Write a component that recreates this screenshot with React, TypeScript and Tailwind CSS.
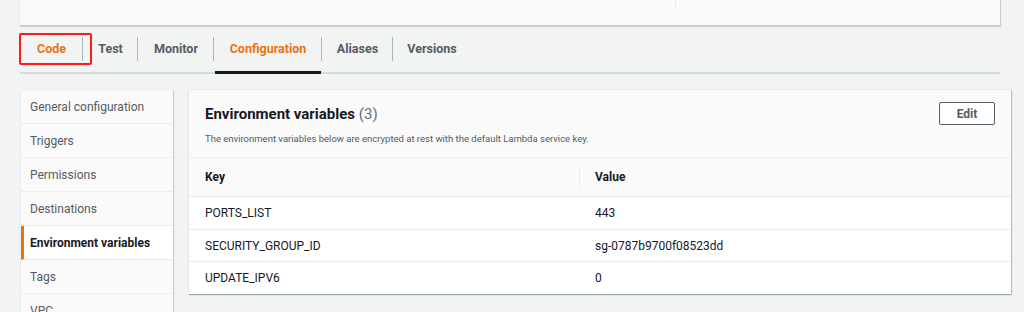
import React from 'react';

const tabs = [
  { label: 'Code', width: 'w-[63px]', active: false, orange: true },
  { label: 'Test', width: 'w-[55px]', active: false, orange: false },
  { label: 'Monitor', width: 'w-[76px]', active: false, orange: false },
  { label: 'Configuration', width: 'w-[108px]', active: true, orange: true },
  { label: 'Aliases', width: 'w-[71px]', active: false, orange: false },
  { label: 'Versions', width: 'w-[78px]', active: false, orange: false },
];

const sideItems = [
  'General configuration',
  'Triggers',
  'Permissions',
  'Destinations',
  'Environment variables',
  'Tags',
  'VPC',
];

const envVars = [
  { key: 'PORTS_LIST', value: '443', h: 'h-[33px]' },
  { key: 'SECURITY_GROUP_ID', value: 'sg-0787b9700f08523dd', h: 'h-[32px]' },
  { key: 'UPDATE_IPV6', value: '0', h: 'h-[32px]' },
];

const App: React.FC = () => {
  return (
    <div className="relative h-[312px] w-[1024px] overflow-hidden bg-[#f2f3f3] font-['Roboto',sans-serif] text-[#16191f]">
      {/* Top card (cut off) */}
      <div className="ml-[20px] flex h-[26px] w-[981px] border-r border-b border-[#c6cccc] bg-[#fafafa] shadow-[0_1px_1px_rgba(0,28,36,0.15)]">
        <div className="h-[8px] w-[656px] border-r border-[#eaeded]" />
      </div>

      {/* Tabs */}
      <div className="relative mt-[8px] ml-[20px] flex h-[40px] w-[980px] border-b-2 border-[#d5dbdb]">
        {tabs.map((t, i) => (
          <div key={t.label} className={`relative flex ${t.width} items-start pt-[7px]`}>
            <span
              className={`w-full text-center text-[12.5px] leading-[16px] font-bold ${t.orange ? 'text-[#ec7211]' : 'text-[#545b64]'}`}
            >
              {t.label}
            </span>
            {i < tabs.length - 1 && <div className="absolute top-[3px] right-0 h-[24px] w-px bg-[#aab7b8]" />}
            {t.active && <div className="absolute right-px bottom-[-2px] left-px h-[3px] bg-[#16191f]" />}
          </div>
        ))}
        {/* red annotation box */}
        <div className="absolute top-[-1px] left-[-1px] h-[32px] w-[73px] rounded-[2px] border-2 border-[#ff1a1a]" />
      </div>

      {/* Content */}
      <div className="mt-[16px] ml-[21px] flex items-start gap-[16px]">
        {/* Sidebar */}
        <div className="w-[152px] bg-[#fafafa] shadow-[0_1px_1px_rgba(0,28,36,0.2),1px_0_1px_rgba(0,28,36,0.15)]">
          {sideItems.map((item) => {
            const active = item === 'Environment variables';
            return (
              <div
                key={item}
                className={`flex h-[34px] items-center border-b border-[#eaeded] text-[12px] ${
                  active ? 'border-l-[3px] border-l-[#ec7211] bg-white pl-[6px] font-bold text-[#16191f]' : 'pl-[9px] text-[#545b64]'
                }`}
              >
                {item}
              </div>
            );
          })}
        </div>

        {/* Main card */}
        <div className="w-[822px] bg-white shadow-[0_1px_1px_rgba(0,28,36,0.35),1px_0_1px_rgba(0,28,36,0.2)]">
          <div className="flex h-[68px] justify-between border-b border-[#eaeded] bg-[#fafafa] pr-[16px] pl-[16px]">
            <div className="pt-[15px]">
              <h2 className="text-[15px] leading-[18px] font-bold">
                Environment variables <span className="font-normal text-[#687078]">(3)</span>
              </h2>
              <p className="mt-[9px] text-[9.5px] text-[#545b64]">
                The environment variables below are encrypted at rest with the default Lambda service key.
              </p>
            </div>
            <div className="pt-[12px]">
              <button className="flex h-[23px] w-[56px] items-center justify-center rounded-[2px] border border-[#545b64] bg-white text-[12px] font-bold text-[#545b64]">
                Edit
              </button>
            </div>
          </div>

          <div className="flex h-[39px] items-center border-b border-[#eaeded] bg-[#fafafa] text-[12px] font-bold">
            <div className="relative flex h-full w-[391px] items-center pl-[16px]">
              Key
              <div className="absolute top-[10px] right-0 h-[19px] w-px bg-[#eaeded]" />
            </div>
            <div className="pl-[15px]">Value</div>
          </div>

          {envVars.map((v, i) => (
            <div
              key={v.key}
              className={`flex ${v.h} items-center text-[12px] ${i < envVars.length - 1 ? 'border-b border-[#eaeded]' : ''}`}
            >
              <div className="w-[391px] pl-[16px]">{v.key}</div>
              <div className="pl-[15px]">{v.value}</div>
            </div>
          ))}
        </div>
      </div>
    </div>
  );
};

export default App;
